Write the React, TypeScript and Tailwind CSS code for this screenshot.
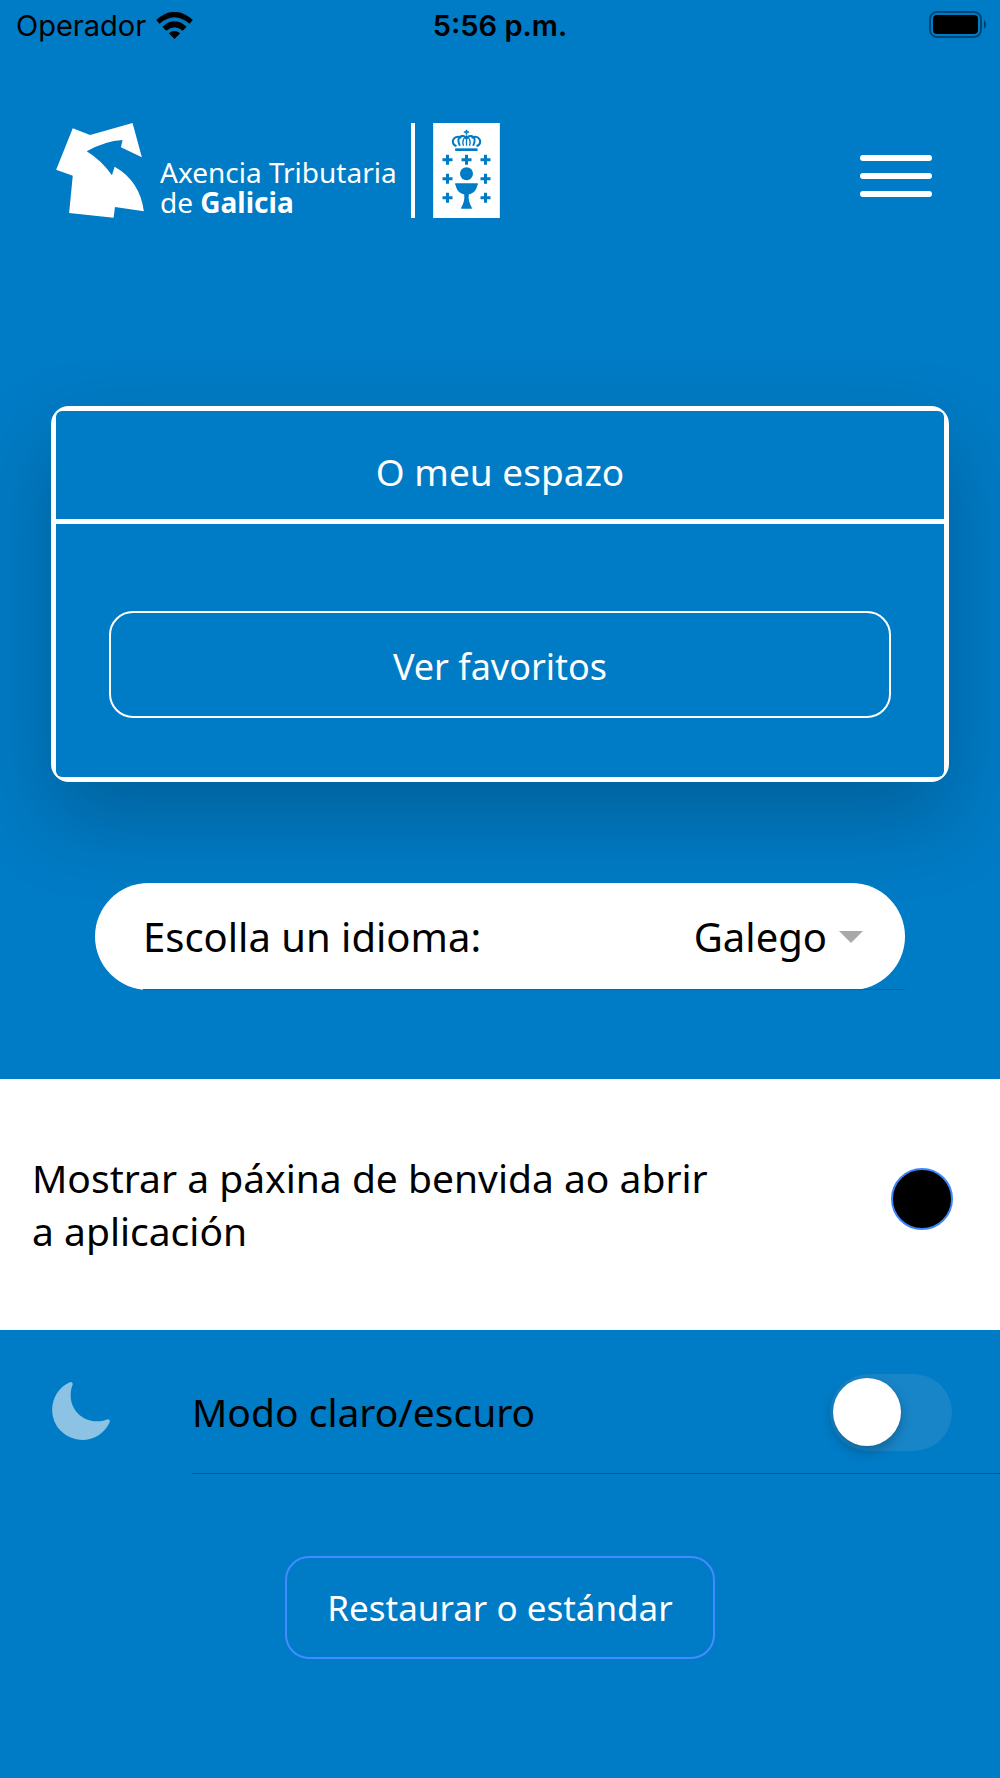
import { IoMoon } from "react-icons/io5";

const crosses = [
  [563, 150],
  [620, 150],
  [677, 150],
  [563, 207],
  [677, 207],
  [563, 264],
  [677, 264],
];

function StatusBar() {
  return (
    <div className="grid h-[50px] grid-cols-3 items-center px-[14px] font-['Inter',sans-serif] text-[29px] leading-none">
      <div className="flex items-center gap-[10px] pl-[2px]">
        <span>Operador</span>
        <svg viewBox="467 31 110 81" className="h-[27px] w-[37px]" aria-label="Wi-Fi">
          <path d="M467 55Q522 6 577 55L567 66Q522 27 477 66Z" />
          <path d="M486 75Q522 43 558 75L547 87Q522 66 497 87Z" />
          <path d="M505 95Q522 81 539 95L522 112Z" />
        </svg>
      </div>
      <span className="text-center font-semibold">5:56 p.m.</span>
      <svg viewBox="0 0 58 28" className="h-7 w-[58px] justify-self-end" aria-label="Battery">
        <rect x="2" y="1" width="51" height="25" rx="7" fill="none" stroke="#000" strokeOpacity="0.4" strokeWidth="2" />
        <rect x="5" y="4" width="45" height="19" rx="4" />
        <path d="M56 9Q58 11 58 13.500Q58 16 56 18Z" fillOpacity="0.5" />
      </svg>
    </div>
  );
}

function Logo() {
  return (
    <div className="flex h-[95px] items-stretch text-white">
      <svg viewBox="48 40 264 286" className="h-[95px] w-[88px]" fill="#fff" aria-hidden="true">
        <path d="M98 56L150 76L278 40L306 143L243 113L248 91Q195 94 140 125Q185 153 216 197L224 172Q300 215 312 306L225 293L221 325L87 311L98 199L48 181Z" />
      </svg>
      <p className="ml-4 w-[251px] pt-[34px] font-['Noto_Sans',sans-serif] text-[28px] leading-[30px] whitespace-nowrap">
        Axencia Tributaria
        <br />
        de <b>Galicia</b>
      </p>
      <div className="w-1 bg-white" />
      <svg viewBox="520 40 200 285" className="ml-[18px] h-[95px] w-[67px]" fill="#007bc5" aria-label="Xunta de Galicia">
        <rect x="520" y="40" width="200" height="285" fill="#fff" />
        <path d="M612 67H628M620 60V75" stroke="#007bc5" strokeWidth="5" />
        <g fill="none" stroke="#007bc5" strokeWidth="6">
          <path d="M590 109C577 106 576 92 584 85C590 79 601 80 604 86" />
          <path d="M650 109C663 106 664 92 656 85C650 79 639 80 636 86" />
          <path d="M600 108C592 94 595 81 606 79C613 78 618 82 620 88" />
          <path d="M640 108C648 94 645 81 634 79C627 78 622 82 620 88" />
          <path d="M611 108C607 96 609 86 620 79C631 86 633 96 629 108" strokeWidth="4" />
          <path d="M620 78V108" strokeWidth="4" />
        </g>
        <rect x="586" y="116" width="67" height="8" />
        {crosses.map(([x, y]) => (
          <path key={`${x}-${y}`} d={`M${x - 15} ${y}H${x + 15}M${x} ${y - 15}V${y + 15}`} stroke="#007bc5" strokeWidth="9" />
        ))}
        <circle cx="620" cy="192" r="19.500" />
        <path d="M586 221H654V227H652C650 243 640 252 627 254C625 268 628 281 636 294V297H604V294C612 281 615 268 613 254C600 252 590 243 588 227H586Z" />
      </svg>
    </div>
  );
}

export default function App() {
  return (
    <div className="min-h-screen bg-[#007bc5] font-['Noto_Sans',sans-serif] text-[39px] text-black">
      <StatusBar />
      <header className="flex items-start justify-between pt-[73px] pr-[68px] pl-14">
        <Logo />
        <button type="button" aria-label="Menú" className="mt-8 flex w-[72px] flex-col gap-3">
          <span className="h-[6px] w-full rounded-full bg-white" />
          <span className="h-[6px] w-full rounded-full bg-white" />
          <span className="h-[6px] w-full rounded-full bg-white" />
        </button>
      </header>

      <main className="pt-[188px]">
        <section className="mx-[51px] rounded-[18px] bg-white p-[5px] text-white shadow-[0_36px_84px_rgba(0,0,0,0.22)]">
          <h1 className="rounded-t-md bg-[#007bc5] pt-[35px] pb-[21px] text-center text-[37px] leading-[52px]">O meu espazo</h1>
          <div className="mt-[5px] rounded-b-md bg-[#007bc5] px-[53px] pt-[87px] pb-[59px]">
            <button type="button" className="h-[107px] w-full rounded-3xl border-2 border-white pt-1 text-[36px]">
              Ver favoritos
            </button>
          </div>
        </section>

        <div className="relative mx-[95px] mt-[101px] flex h-[107px] items-center justify-between rounded-full bg-white pr-[42px] pl-12 text-[40px]">
          <label htmlFor="language">Escolla un idioma:</label>
          <div className="flex items-center">
            <select id="language" className="appearance-none bg-transparent pr-9 text-right" defaultValue="gl">
              <option value="gl">Galego</option>
            </select>
            <svg viewBox="0 0 24 12" className="pointer-events-none -ml-6 h-3 w-6" fill="#a9a9a9" aria-hidden="true">
              <path d="M0 0H24L12 12Z" />
            </svg>
          </div>
          <div className="absolute right-0 bottom-0 left-12 h-px bg-[#36576c]" />
        </div>

        <div className="mt-[89px] flex items-start justify-between bg-white pt-[72px] pr-[47px] pb-[73px] pl-8">
          <label htmlFor="welcome" className="max-w-[730px] leading-[53px]">
            Mostrar a páxina de benvida ao abrir
            <br />a aplicación
          </label>
          <input
            id="welcome"
            type="checkbox"
            defaultChecked
            className="mt-[17px] size-[62px] shrink-0 appearance-none rounded-full border-2 border-[#3d85fb] bg-black"
          />
        </div>

        <div className="flex items-stretch pl-12">
          <IoMoon className="mt-12 size-[66px] shrink-0 text-[#8cc2e4]" aria-hidden="true" />
          <div className="ml-[78px] flex h-36 grow items-center justify-between border-b border-[#2b5068] pt-[21px] pr-12">
            <label htmlFor="dark">Modo claro/escuro</label>
            <input
              id="dark"
              type="checkbox"
              role="switch"
              className="h-[77px] w-[122px] appearance-none rounded-full bg-[#1885c9] py-1 pl-[3px] before:block before:size-[68px] before:rounded-full before:bg-white before:shadow-[0_5px_12px_rgba(0,0,0,0.25)]"
            />
          </div>
        </div>

        <div className="flex justify-center pt-[82px] pb-10">
          <button type="button" className="h-[103px] rounded-3xl border-2 border-[#428cff] px-10 pt-[2px] text-[35px] text-white">
            Restaurar o estándar
          </button>
        </div>
      </main>
    </div>
  );
}
